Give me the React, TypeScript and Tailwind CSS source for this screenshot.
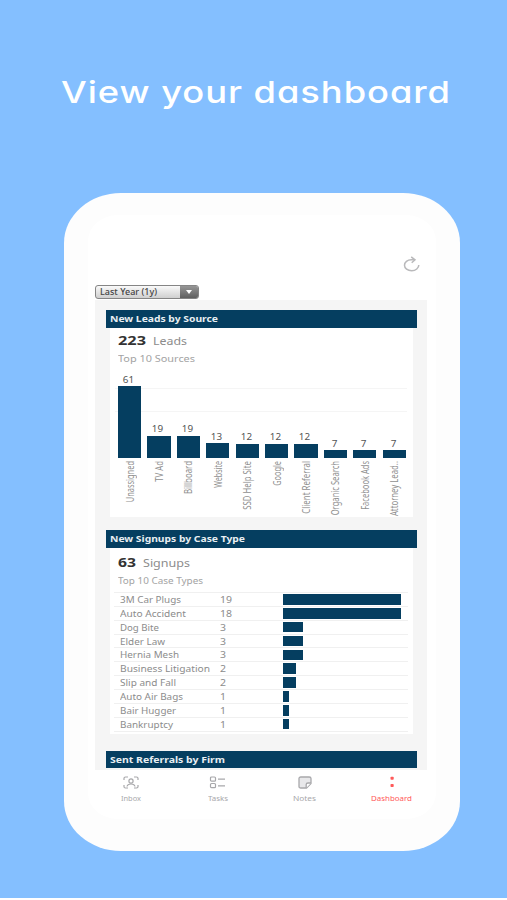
import { useLayoutEffect, useRef, useState } from "react";

type FitProps = { text: string; size: number; className?: string; vertical?: boolean };

// Stretches a line of text along its reading direction to the given length.
function Fit({ text, size, className = "", vertical = false }: FitProps) {
  const ref = useRef<HTMLSpanElement>(null);
  const [scale, setScale] = useState(1);
  useLayoutEffect(() => {
    const el = ref.current;
    if (!el) return;
    const natural = vertical ? el.offsetHeight : el.getBoundingClientRect().width / scale;
    if (natural > 0) setScale(size / natural);
  }, [text, size, vertical]);
  if (vertical) {
    return (
      <span className="flex items-start justify-center">
        <span
          ref={ref}
          className={`block origin-top whitespace-nowrap [writing-mode:sideways-lr] ${className}`}
          style={{ transform: `scaleY(${scale})` }}
        >
          {text}
        </span>
      </span>
    );
  }
  return (
    <span className="block shrink-0" style={{ width: size }}>
      <span
        ref={ref}
        className={`inline-block origin-left whitespace-nowrap ${className}`}
        style={{ transform: `scaleX(${scale})` }}
      >
        {text}
      </span>
    </span>
  );
}

const sources = [
  { name: "Unassigned", value: 61, bar: 72, len: 41 },
  { name: "TV Ad", value: 19, bar: 22.5, len: 21 },
  { name: "Billboard", value: 19, bar: 22.5, len: 33 },
  { name: "Website", value: 13, bar: 15, len: 27 },
  { name: "SSD Help Site", value: 12, bar: 14.5, len: 49 },
  { name: "Google", value: 12, bar: 14.5, len: 25 },
  { name: "Client Referral", value: 12, bar: 14.5, len: 53 },
  { name: "Organic Search", value: 7, bar: 8, len: 54 },
  { name: "Facebook Ads", value: 7, bar: 8, len: 49 },
  { name: "Attorney Lead..", value: 7, bar: 8, len: 55 },
];

const cases = [
  { name: "3M Car Plugs", value: 19, bar: 118.5, len: 61 },
  { name: "Auto Accident", value: 18, bar: 118.5, len: 66 },
  { name: "Dog Bite", value: 3, bar: 20, len: 39 },
  { name: "Elder Law", value: 3, bar: 20, len: 45 },
  { name: "Hernia Mesh", value: 3, bar: 20, len: 59 },
  { name: "Business Litigation", value: 2, bar: 13.5, len: 90 },
  { name: "Slip and Fall", value: 2, bar: 13.5, len: 56 },
  { name: "Auto Air Bags", value: 1, bar: 6.5, len: 63 },
  { name: "Bair Hugger", value: 1, bar: 6.5, len: 56 },
  { name: "Bankruptcy", value: 1, bar: 6.5, len: 53 },
];

function Header({ text, size }: { text: string; size: number }) {
  return (
    <div className="ml-[10.5px] flex h-[17.5px] w-[311.5px] items-center bg-[#053e60] pl-[4.5px] text-[9px] leading-none font-bold text-[#e8eef2]">
      <Fit text={text} size={size} />
    </div>
  );
}

function Stat({ value, label, size, caption, captionSize, valueSize }: {
  value: string; label: string; size: number; caption: string; captionSize: number; valueSize: number;
}) {
  return (
    <>
      <div className="flex h-[15px] items-center gap-[7px] pl-[7.5px] leading-none">
        <Fit text={value} size={valueSize} className="text-[13px] font-bold text-[#333]" />
        <Fit text={label} size={size} className="text-[11.5px] text-[#8c8c8c]" />
      </div>
      <div className="mt-[6px] h-[12px] pl-[7.5px] text-[9px] leading-[12px] text-[#a3a3a3]">
        <Fit text={caption} size={captionSize} />
      </div>
    </>
  );
}

function ScanIcon() {
  return (
    <svg width="16" height="13" viewBox="0 0 16 13" fill="none" stroke="currentColor" strokeWidth="1.200">
      <path d="M1 4V2.2Q1 1 2.5 1H5M11 1h2.5Q15 1 15 2.2V4M15 9v1.8Q15 12 13.500 12H11M5 12H2.500Q1 12 1 10.800V9" />
      <circle cx="8" cy="5" r="2.1" />
      <path d="M4 10.500Q4.500 8 8 8T12 10.500" />
    </svg>
  );
}

function TasksIcon() {
  return (
    <svg width="17" height="13" viewBox="0 0 17 13" fill="none" stroke="currentColor" strokeWidth="1.200">
      <rect x="1.500" y="1" width="5" height="4.200" rx="1" />
      <rect x="1.500" y="7.500" width="5" height="4.200" rx="1" />
      <path d="M9 3.200h7M9 9.800h7" />
    </svg>
  );
}

function NoteIcon() {
  return (
    <svg width="14" height="13" viewBox="0 0 14 13" fill="none" stroke="currentColor" strokeWidth="1.300">
      <path d="M2.800 1h8.400Q13 1 13 2.600V7.500L8.500 12H2.800Q1 12 1 10.400V2.600Q1 1 2.800 1Z" fill="#e8e8ea" />
      <path d="M13 7h-3Q8.200 7 8.200 8.600V12" fill="#fff" />
    </svg>
  );
}

function DashIcon() {
  return (
    <svg width="14" height="13" viewBox="0 0 14 13" fill="currentColor">
      <rect x="5.500" y=".8" width="3.200" height="3" rx=".8" />
      <rect x="5.500" y="8" width="3.200" height="3" rx=".8" />
    </svg>
  );
}

const tabs = [
  { label: "Inbox", size: 20, icon: <ScanIcon />, active: false },
  { label: "Tasks", size: 20, icon: <TasksIcon />, active: false },
  { label: "Notes", size: 23, icon: <NoteIcon />, active: false },
  { label: "Dashboard", size: 41, icon: <DashIcon />, active: true },
];

export default function App() {
  return (
    <div className="flex h-[900px] w-[507px] flex-col overflow-hidden bg-white font-['Noto_Sans','Open_Sans',sans-serif]">
      <div className="h-[898px] bg-[#84bfff]">
        <div className="flex h-[193px] pt-[71.500px] pl-[61px]">
          <h1 className="h-[40px] font-['Inter',sans-serif] text-[30.500px] leading-[40px] font-medium tracking-[0.8px] text-white [font-feature-settings:'cv11','ss03']">
            <Fit text="View your dashboard" size={390} />
          </h1>
        </div>

        <div className="ml-[64px] h-[657.5px] w-[395.5px] bg-[#fdfdfd] px-[24px] pt-[22px] [border-radius:57px_/_50px]">
          <div className="flex h-[604px] w-[348px] flex-col bg-white pl-[7px] [border-radius:30px_/_26px]">
            <div className="flex h-[70px] justify-end pt-[41px] pr-[16px]">
              <svg width="17" height="17" viewBox="0 0 17 17" fill="none" stroke="#b9b9bb" strokeWidth="1.500">
                <path d="M11.500 3.800H8.200C4.500 3.800 1.500 6 1.500 9.200S4.600 14.700 8.700 14.700S15.800 12 15.800 9" />
                <path d="M8.200.8L12 3.800L8.700 6.800" />
              </svg>
            </div>

            <div className="flex h-[14px] w-[103.5px] overflow-hidden rounded-[3px] border border-[#858585] bg-linear-to-b from-[#fafafa] to-[#cfcfcf]">
              <div className="flex flex-1 items-center pl-[4px] text-[8px] leading-none font-medium text-[#444]">
                <Fit text="Last Year (1y)" size={57} />
              </div>
              <div className="flex w-[18px] items-center justify-center bg-linear-to-b from-[#969696] to-[#606060]">
                <span className="h-0 w-0 border-x-[3.5px] border-t-[4px] border-x-transparent border-t-white" />
              </div>
            </div>

            <div className="mt-px h-[470px] w-[332px] bg-[#f5f5f5] pt-[10px]">
              <Header text="New Leads by Source" size={108} />
              <section className="ml-[15px] h-[189.5px] w-[303px] bg-white pt-[4px]">
                <Stat value="223" valueSize={28} label="Leads" size={34} caption="Top 10 Sources" captionSize={77} />
                <div className="ml-[5px] flex h-[93.500px] w-[292px] items-end gap-[6.100px] bg-[linear-gradient(#f5f5f5,#f5f5f5),linear-gradient(#f5f5f5,#f5f5f5)] bg-[length:100%_1px,100%_1px] bg-[position:0_23px,0_46px] bg-no-repeat pl-[3px]">
                  {sources.map((s) => (
                    <div key={s.name} className="flex w-[23.3px] shrink-0 flex-col">
                      <span className="h-[12.500px] w-[21px] scale-x-110 text-center text-[9px] leading-[11px] text-[#555]">{s.value}</span>
                      <span className="w-full bg-[#053e60]" style={{ height: s.bar }} />
                    </div>
                  ))}
                </div>
                <div className="flex gap-[6.100px] pt-[3px] pl-[8px]">
                  {sources.map((s) => (
                    <div key={s.name} className="h-[56px] w-[23.3px] shrink-0 text-[10px] leading-[12px] text-[#909090]">
                      <Fit vertical text={s.name} size={s.len} />
                    </div>
                  ))}
                </div>
              </section>

              <div className="h-[13px]" />
              <Header text="New Signups by Case Type" size={135} />
              <section className="ml-[15px] h-[186px] w-[303px] bg-white pt-[6px]">
                <Stat value="63" valueSize={18} label="Signups" size={47} caption="Top 10 Case Types" captionSize={85} />
                <div className="mt-[5.500px] ml-[4px] w-[294px] border-t border-[#f0f0f0]">
                  {cases.map((c) => (
                    <div key={c.name} className="flex h-[13.870px] items-center border-b border-[#f0f0f0] pl-[6px] text-[9.500px] leading-[12px] text-[#8c8c8c]">
                      <div className="w-[99.500px] pt-px">
                        <Fit text={c.name} size={c.len} />
                      </div>
                      <div className="w-[63px] pt-px">
                        <Fit text={String(c.value)} size={c.value > 9 ? 12 : 6} />
                      </div>
                      <div className="h-[10.500px] bg-[#053e60]" style={{ width: c.bar }} />
                    </div>
                  ))}
                </div>
              </section>

              <div className="h-[17px]" />
              <Header text="Sent Referrals by Firm" size={115} />
            </div>

            <nav className="-ml-[8px] flex w-[348px] pt-[5.500px]">
              {tabs.map((t) => (
                <div key={t.label} className={`flex w-[87px] flex-col items-center ${t.active ? "text-[#ff5a5a]" : "text-[#a8a8ab]"}`}>
                  {t.icon}
                  <span className="mt-[6px] text-[7px] leading-[8px]">
                    <Fit text={t.label} size={t.size} />
                  </span>
                </div>
              ))}
            </nav>
          </div>
        </div>
      </div>
    </div>
  );
}
